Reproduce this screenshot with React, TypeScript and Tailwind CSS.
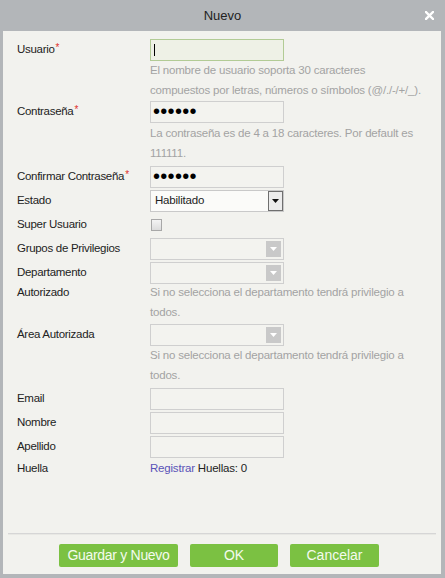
import React from "react";

const Label = ({ text, req }: { text: string; req?: boolean }) => (
  <div className="w-[133px] shrink-0 h-[24px] flex items-center text-[11.5px] tracking-[-0.3px] text-[#222]">
    {text}
    {req && <span className="text-[#e0302a] text-[10px] relative -top-[3px] ml-px">*</span>}
  </div>
);

const Box = ({ children, cls }: { children?: React.ReactNode; cls?: string }) => (
  <div className={"my-px h-[22px] w-[134px] border flex items-center relative " + (cls ?? "border-[#cfcfcf] bg-[#f3f3ef]")}>
    {children}
  </div>
);

const Hint = ({ children, cls }: { children: React.ReactNode; cls?: string }) => (
  <div className={"w-[274px] text-[11.5px] tracking-[-0.2px] leading-[20px] text-[#a3a3a3] " + (cls ?? "")}>{children}</div>
);

const DisabledSelect = () => (
  <Box>
    <div className="absolute right-[2px] top-[2px] w-[15px] h-[16px] bg-[#c9c9c9] flex items-center justify-center">
      <svg width="7" height="4" viewBox="0 0 7 4">
        <path d="M0 0 L7 0 L3.5 4 Z" fill="#fff" />
      </svg>
    </div>
  </Box>
);

const Dots = () => (
  <span className="pl-[2px] text-[20px] leading-none text-black tracking-[0.3px] relative -top-[1px]">••••••</span>
);

export default function App() {
  return (
    <div className="w-[445px] h-[578px] bg-[#b3b6b9] flex flex-col font-['Liberation_Sans',Arial,sans-serif]">
      <div className="h-[31px] shrink-0 relative flex items-center justify-center text-[13px] text-[#222]">
        Nuevo
        <svg className="absolute right-[11px] top-[11px]" width="9" height="9" viewBox="0 0 9 9">
          <path d="M1 1 L8 8 M8 1 L1 8" stroke="#fff" strokeWidth="2.4" strokeLinecap="square" />
        </svg>
      </div>
      <div className="ml-[3px] mr-[4px] mb-[4px] flex-1 bg-[#f2f2ee] flex flex-col">
        <div className="flex-1 pt-[7px] pl-[14px]">
          <div className="flex">
            <Label text="Usuario" req />
            <div>
              <Box cls="border-[#b2cb95] bg-[#eef1e6]">
                <div className="ml-[3px] w-px h-[12px] bg-black" />
              </Box>
              <Hint cls="-mt-[2px]">
                El nombre de usuario soporta 30 caracteres compuestos por letras, números o símbolos (@/./-/+/_).
              </Hint>
            </div>
          </div>
          <div className="flex">
            <Label text="Contraseña" req />
            <div>
              <Box>
                <Dots />
              </Box>
              <Hint cls="-mt-[1px]">La contraseña es de 4 a 18 caracteres. Por default es 111111.</Hint>
            </div>
          </div>
          <div className="flex mt-[2px]">
            <Label text="Confirmar Contraseña" req />
            <Box>
              <Dots />
            </Box>
          </div>
          <div className="flex">
            <Label text="Estado" />
            <Box cls="border-[#c9c9c9] bg-[#fbfbf9]">
              <span className="pl-[4px] text-[11.5px] tracking-[-0.2px] text-[#222]">Habilitado</span>
              <div className="absolute right-0 top-0 bottom-0 w-[15px] border border-[#6f6f6f] bg-[#ececec] flex items-center justify-center">
                <svg width="7" height="4" viewBox="0 0 7 4">
                  <path d="M0 0 L7 0 L3.5 4 Z" fill="#111" />
                </svg>
              </div>
            </Box>
          </div>
          <div className="flex">
            <Label text="Super Usuario" />
            <div className="h-[24px] flex items-center">
              <div className="ml-px w-[11px] h-[12px] border border-[#a8a8a8] bg-gradient-to-b from-[#f4f4f4] to-[#dcdcdc]" />
            </div>
          </div>
          <div className="flex">
            <Label text="Grupos de Privilegios" />
            <DisabledSelect />
          </div>
          <div className="flex">
            <Label text="Departamento" />
            <DisabledSelect />
          </div>
          <div className="flex -mt-[3px]">
            <div className="w-[133px] shrink-0 text-[11.5px] tracking-[-0.3px] leading-[20px] text-[#222]">Autorizado</div>
            <Hint>Si no selecciona el departamento tendrá privilegio a todos.</Hint>
          </div>
          <div className="flex mt-px">
            <Label text="Área Autorizada" />
            <div>
              <DisabledSelect />
              <Hint cls="-mt-[2px]">Si no selecciona el departamento tendrá privilegio a todos.</Hint>
            </div>
          </div>
          <div className="flex mt-[2px]">
            <Label text="Email" />
            <Box />
          </div>
          <div className="flex">
            <Label text="Nombre" />
            <Box />
          </div>
          <div className="flex">
            <Label text="Apellido" />
            <Box />
          </div>
          <div className="flex -mt-[2px]">
            <Label text="Huella" />
            <div className="h-[24px] flex items-center text-[11.5px] tracking-[-0.2px] text-[#222]">
              <span className="text-[#5a52b8]">Registrar</span>&nbsp;Huellas: 0
            </div>
          </div>
        </div>
        <div className="mx-[5px] h-[2px] border-t border-[#d6d6d6] bg-[#e8e8e4]" />
        <div className="pt-[9px] pb-[7px] flex justify-center gap-[12px] pr-[6px]">
          <button className="w-[119px] h-[23px] rounded-[2px] bg-[#7bc142] text-[#f4fbee] text-[14px] tracking-[-0.3px]">Guardar y Nuevo</button>
          <button className="w-[88px] h-[23px] rounded-[2px] bg-[#7bc142] text-[#f4fbee] text-[14px]">OK</button>
          <button className="w-[89px] h-[23px] rounded-[2px] bg-[#7bc142] text-[#f4fbee] text-[14px]">Cancelar</button>
        </div>
      </div>
    </div>
  );
}
